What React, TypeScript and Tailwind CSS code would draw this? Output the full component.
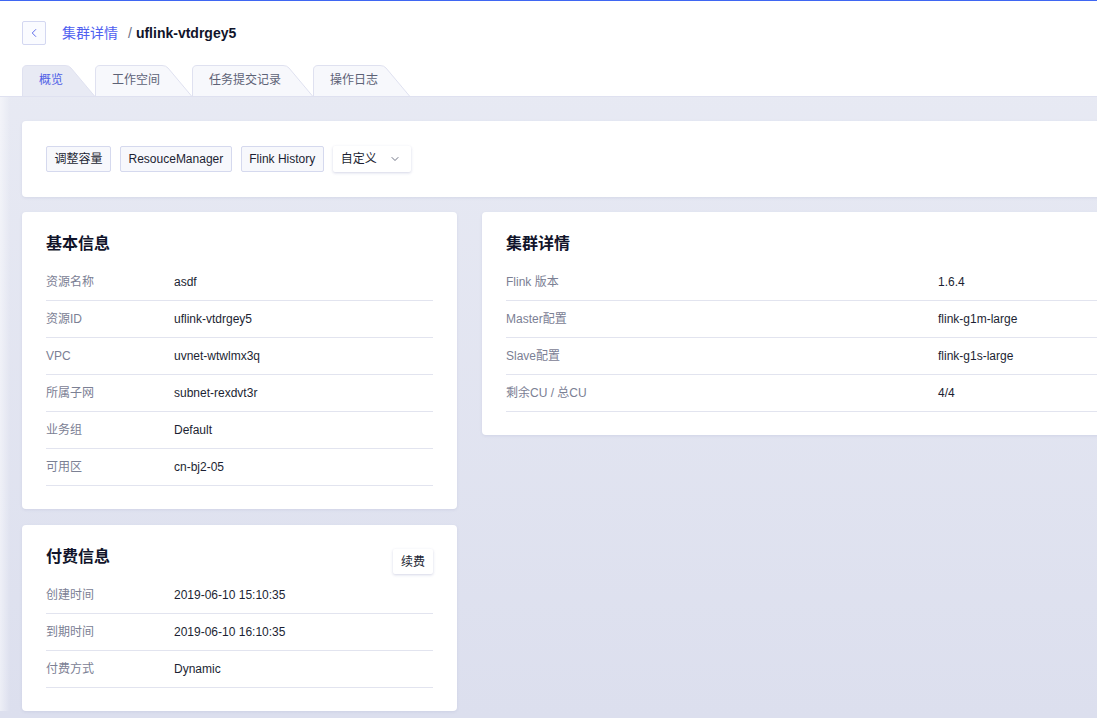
import { ChevronLeft, ChevronDown } from 'lucide-react';

const tabs = [
  { label: '概览', w: 73, active: true },
  { label: '工作空间', w: 97 },
  { label: '任务提交记录', w: 121 },
  { label: '操作日志', w: 97 },
];

const basicRows = [
  ['资源名称', 'asdf'],
  ['资源ID', 'uflink-vtdrgey5'],
  ['VPC', 'uvnet-wtwlmx3q'],
  ['所属子网', 'subnet-rexdvt3r'],
  ['业务组', 'Default'],
  ['可用区', 'cn-bj2-05'],
];

const clusterRows = [
  ['Flink 版本', '1.6.4'],
  ['Master配置', 'flink-g1m-large'],
  ['Slave配置', 'flink-g1s-large'],
  ['剩余CU / 总CU', '4/4'],
];

const billingRows = [
  ['创建时间', '2019-06-10 15:10:35'],
  ['到期时间', '2019-06-10 16:10:35'],
  ['付费方式', 'Dynamic'],
];

function Tab({ label, w, active }: { label: string; w: number; active?: boolean }) {
  const d = `M0.5 31 V5 Q0.5 0.5 5 0.5 H${w - 30} Q${w - 26} 0.5 ${w - 24} 3 L${w - 0.5} 31`;
  return (
    <div className="relative h-[31px] shrink-0" style={{ width: w }}>
      <svg className="absolute inset-0" width={w} height={31}>
        <path d={d} fill={active ? '#e8eaf4' : '#f7f8fc'} stroke="#dfe1f0" strokeWidth={1} />
      </svg>
      <span
        className={`relative block pl-[17px] text-xs leading-[31px] ${active ? 'text-[#4f5fe6]' : 'text-[#5d6276]'}`}
      >
        {label}
      </span>
    </div>
  );
}

function InfoRow({ label, value, labelW }: { label: string; value: string; labelW: number }) {
  return (
    <div className="flex h-[37px] items-center border-b border-[#e2e4ef] text-xs">
      <span className="shrink-0 text-[#7b8094]" style={{ width: labelW }}>{label}</span>
      <span className="text-[#1c1f33]">{value}</span>
    </div>
  );
}

function Card({ title, children, action }: { title: string; children: React.ReactNode; action?: React.ReactNode }) {
  return (
    <div className="rounded-[4px] bg-white px-6 pt-5 pb-[23px] shadow-[0_1px_3px_rgba(70,80,150,0.10)]">
      <div className="mb-2 flex h-6 items-start justify-between">
        <h2 className="text-base leading-6 font-bold text-[#11142a]">{title}</h2>
        {action}
      </div>
      {children}
    </div>
  );
}

export default function App() {
  return (
    <div
      className="relative h-[718px] w-[1097px] overflow-hidden border-t border-[#3f66f2] bg-gradient-to-b from-[#e9ebf4] to-[#dcdfee] text-[#1c1f33]"
      style={{ fontFamily: '"Liberation Sans", "Noto Sans CJK SC", sans-serif' }}
    >
      <header className="bg-white px-[22px] pt-5">
        <div className="flex h-6 items-center">
          <button className="flex h-6 w-6 items-center justify-center rounded-[2px] border border-[#d3d7f1] bg-[#fafbff] text-[#5563ea]">
            <ChevronLeft className="h-3.5 w-3.5" strokeWidth={1.6} />
          </button>
          <span className="ml-4 text-sm text-[#4f5ff0]">集群详情</span>
          <span className="ml-2.5 text-sm text-[#6b7086]">/</span>
          <span className="ml-1 text-sm font-bold text-[#11142a]">uflink-vtdrgey5</span>
        </div>
        <div className="mt-[20px] flex">
          {tabs.map((t) => (
            <Tab key={t.label} {...t} />
          ))}
        </div>
      </header>
      <div className="h-px bg-[#dfe1f0]" />

      <main className="relative w-[1900px] px-[22px] pt-6">
        <div className="pointer-events-none absolute inset-y-0 left-0 w-[10px] bg-gradient-to-r from-white/50 to-transparent" />
        <div className="w-[1817px] rounded-[4px] bg-white px-6 py-[25px] shadow-[0_1px_3px_rgba(70,80,150,0.10)]">
          <div className="flex gap-[9px] text-xs text-[#1c1f33]">
            <button className="h-[26px] rounded-[2px] border border-[#d5d9ee] bg-[#f7f8fc] px-[7.5px]">调整容量</button>
            <button className="h-[26px] rounded-[2px] border border-[#d5d9ee] bg-[#f7f8fc] px-[7.5px]">ResouceManager</button>
            <button className="h-[26px] rounded-[2px] border border-[#d5d9ee] bg-[#f7f8fc] px-[7.5px]">Flink History</button>
            <button className="flex h-[26px] items-center gap-[12px] rounded-[2px] bg-white pr-[10px] pl-2 shadow-[0_1px_3px_rgba(60,70,140,0.22)]">
              自定义
              <ChevronDown className="h-3 w-3 text-[#4a4f66]" strokeWidth={1.6} />
            </button>
          </div>
        </div>

        <div className="mt-[15px] grid grid-cols-[435px_1357px] items-start gap-x-[25px]">
          <div className="flex flex-col gap-4">
            <Card title="基本信息">
              {basicRows.map(([l, v]) => (
                <InfoRow key={l} label={l} value={v} labelW={128} />
              ))}
            </Card>
            <Card
              title="付费信息"
              action={
                <button className="mt-1 h-[25px] rounded-[2px] bg-white px-2 text-xs text-[#1c1f33] shadow-[0_1px_3px_rgba(60,70,140,0.22)]">
                  续费
                </button>
              }
            >
              {billingRows.map(([l, v]) => (
                <InfoRow key={l} label={l} value={v} labelW={128} />
              ))}
            </Card>
          </div>
          <Card title="集群详情">
            {clusterRows.map(([l, v]) => (
              <InfoRow key={l} label={l} value={v} labelW={432} />
            ))}
          </Card>
        </div>
      </main>
    </div>
  );
}
